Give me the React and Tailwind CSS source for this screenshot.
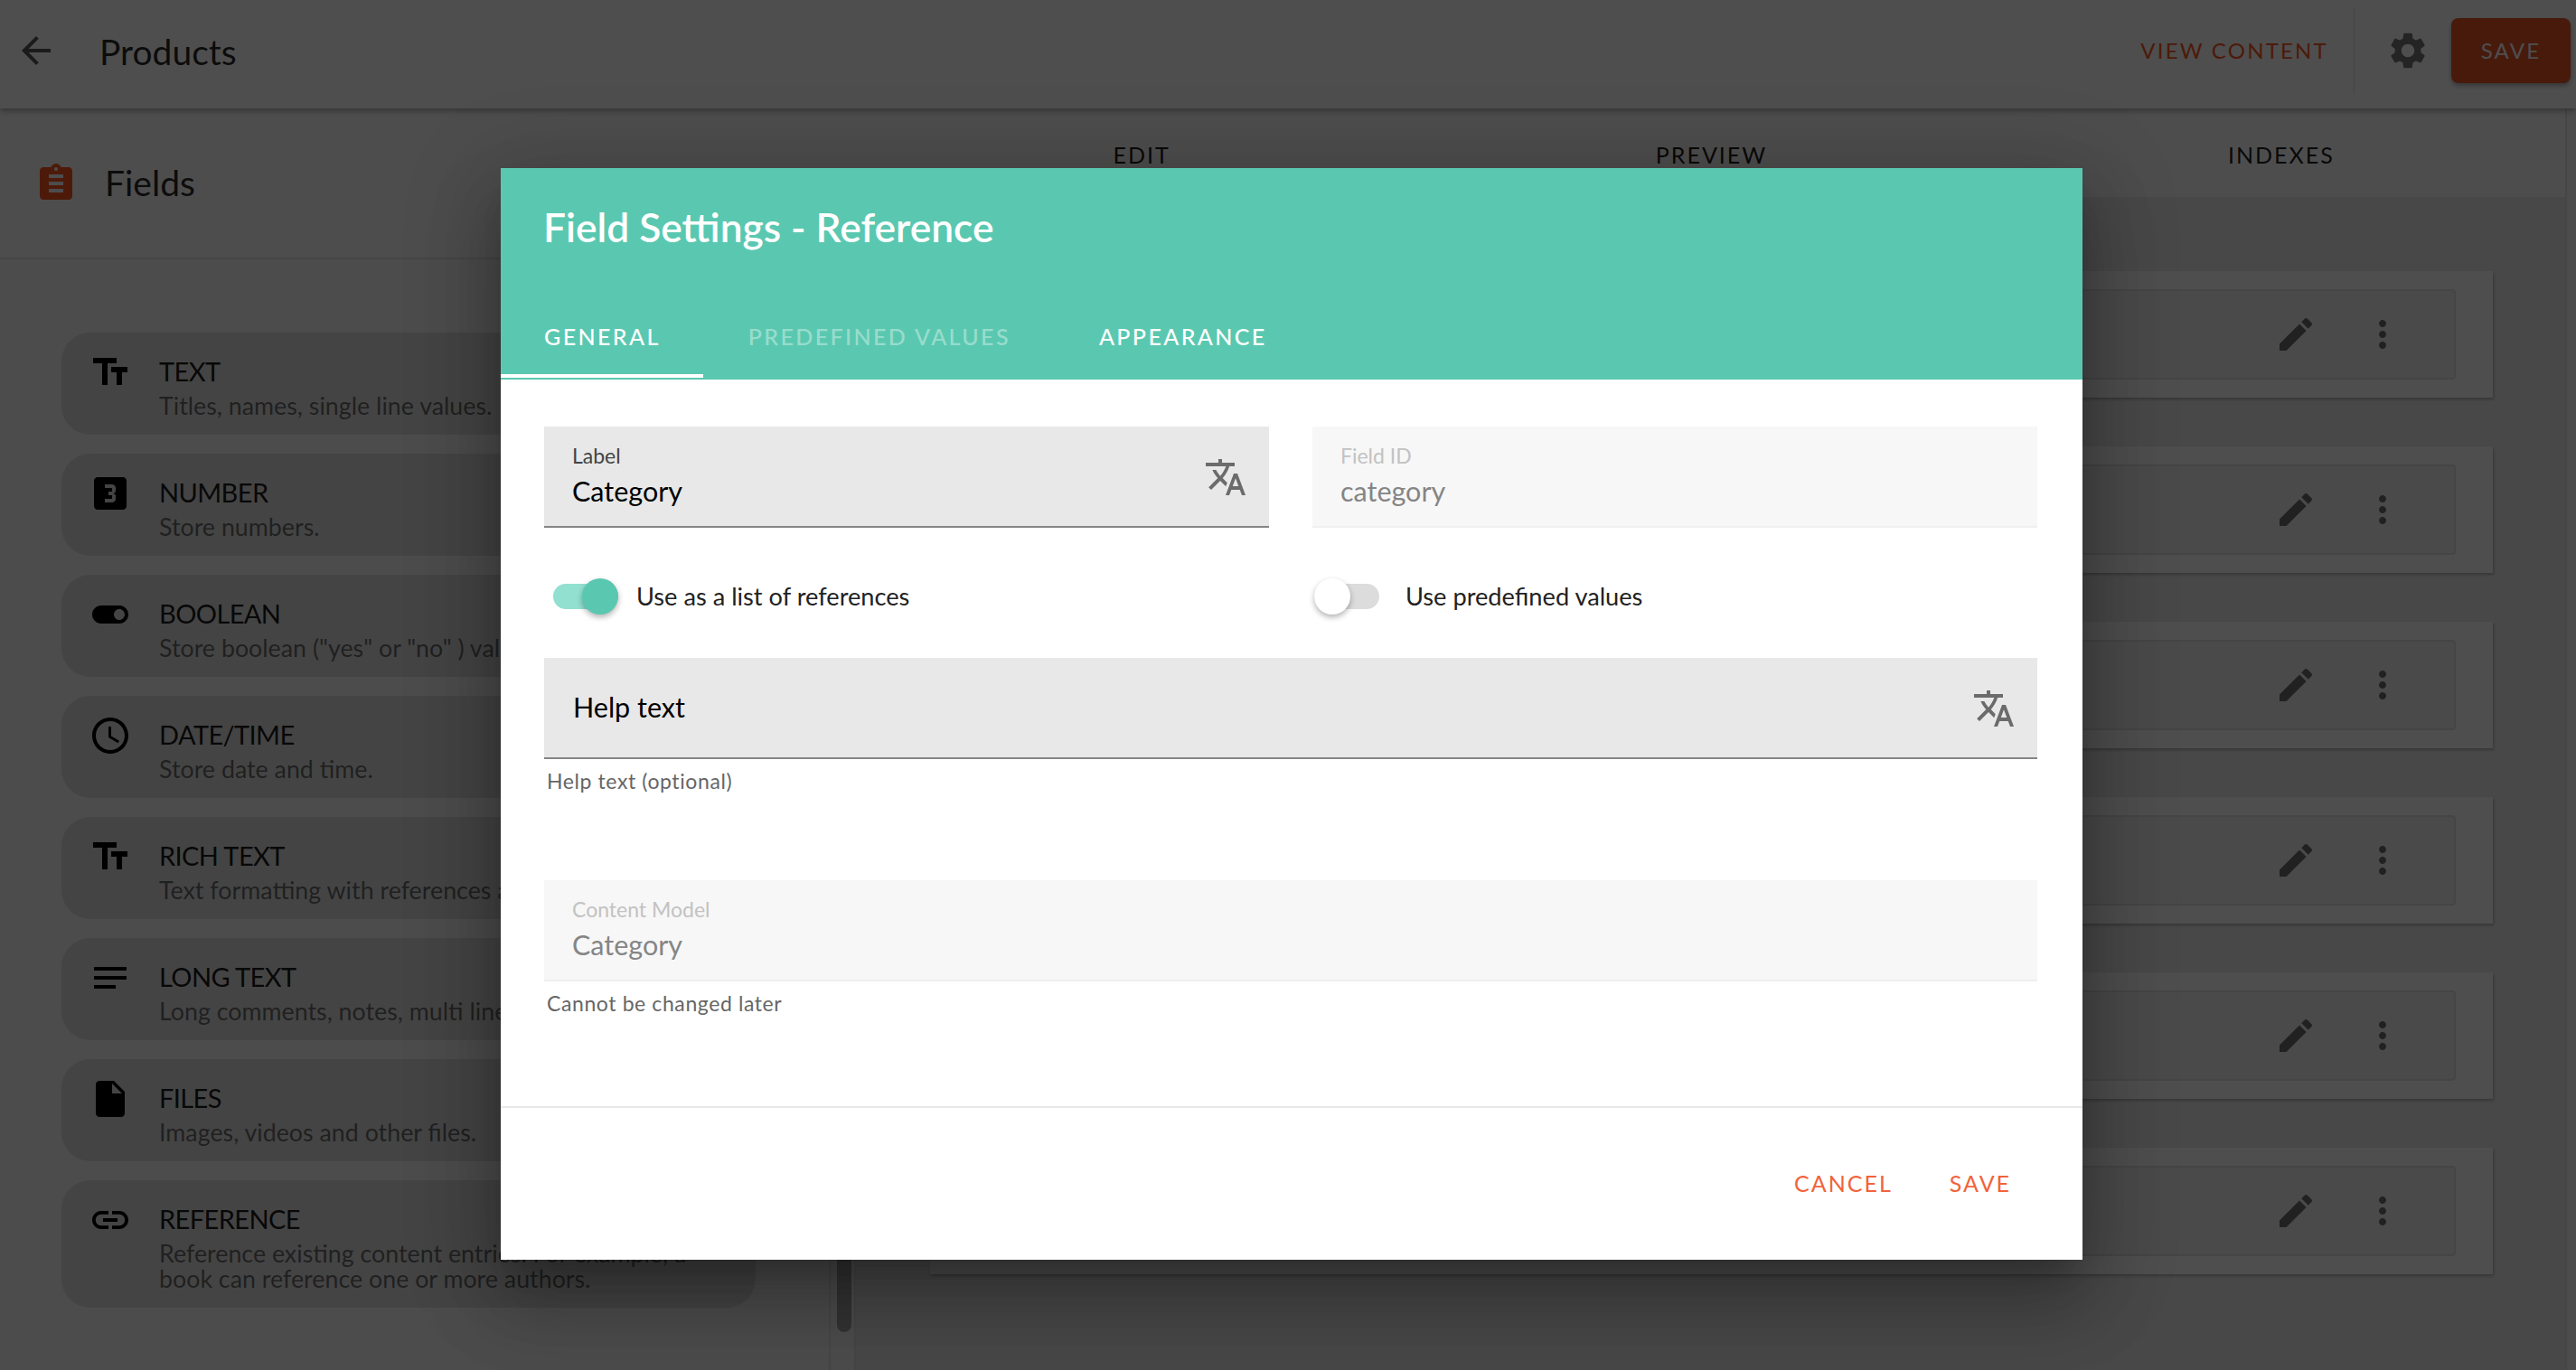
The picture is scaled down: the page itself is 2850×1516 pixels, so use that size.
const FONT = "font-['Lato','Liberation_Sans',sans-serif]"

const ICONS = {
  back: 'M20 11H7.83l5.59-5.59L12 4l-8 8 8 8 1.41-1.41L7.83 13H20v-2z',
  gear: 'M19.14 12.94c.04-.3.06-.61.06-.94 0-.32-.02-.64-.07-.94l2.03-1.58c.18-.14.23-.41.12-.61l-1.92-3.32c-.12-.22-.37-.29-.59-.22l-2.39.96c-.5-.38-1.03-.7-1.62-.94l-.36-2.54c-.04-.24-.24-.41-.48-.41h-3.84c-.24 0-.43.17-.47.41l-.36 2.54c-.59.24-1.13.57-1.62.94l-2.39-.96c-.22-.08-.47 0-.59.22L2.74 8.87c-.12.21-.08.47.12.61l2.03 1.58c-.05.3-.09.63-.09.94s.02.64.07.94l-2.03 1.58c-.18.14-.23.41-.12.61l1.92 3.32c.12.22.37.29.59.22l2.39-.96c.5.38 1.03.7 1.62.94l.36 2.54c.05.24.24.41.48.41h3.84c.24 0 .44-.17.47-.41l.36-2.54c.59-.24 1.13-.56 1.62-.94l2.39.96c.22.08.47 0 .59-.22l1.92-3.32c.12-.22.07-.47-.12-.61l-2.01-1.58zM12 15.6c-1.98 0-3.6-1.62-3.6-3.6s1.62-3.6 3.6-3.6 3.6 1.62 3.6 3.6-1.62 3.6-3.6 3.6z',
  assignment: 'M19 3h-4.18C14.4 1.84 13.3 1 12 1c-1.3 0-2.4.84-2.82 2H5c-1.1 0-2 .9-2 2v14c0 1.1.9 2 2 2h14c1.1 0 2-.9 2-2V5c0-1.1-.9-2-2-2zm-7 0c.55 0 1 .45 1 1s-.45 1-1 1-1-.45-1-1 .45-1 1-1zm4 14H8v-2h8v2zm0-4H8v-2h8v2zm0-4H8V7h8v2z',
  text: 'M2.5 4v3h5v12h3V7h5V4h-13zm19 5h-9v3h3v7h3v-7h3V9z',
  number: 'M19.01 3h-14c-1.1 0-2 .9-2 2v14c0 1.1.9 2 2 2h14c1.1 0 2-.9 2-2V5c0-1.1-.9-2-2-2zm-4 7.5c0 .83-.67 1.5-1.5 1.5.83 0 1.5.67 1.5 1.5V15c0 1.11-.9 2-2 2h-4v-2h4v-2h-2v-2h2V9h-4V7h4c1.1 0 2 .89 2 2v1.5z',
  toggle: 'M17 7H7c-2.76 0-5 2.24-5 5s2.24 5 5 5h10c2.76 0 5-2.24 5-5s-2.24-5-5-5zm0 8c-1.66 0-3-1.34-3-3s1.34-3 3-3 3 1.34 3 3-1.34 3-3 3z',
  clock: 'M11.99 2C6.47 2 2 6.48 2 12s4.47 10 9.99 10C17.52 22 22 17.52 22 12S17.52 2 11.99 2zM12 20c-4.42 0-8-3.58-8-8s3.58-8 8-8 8 3.58 8 8-3.58 8-8 8zm.5-13H11v6l5.25 3.15.75-1.23-4.5-2.67z',
  notes: 'M3 18h12v-2H3v2zM3 6v2h18V6H3zm0 7h18v-2H3v2z',
  file: 'M6 2c-1.1 0-1.99.9-1.99 2L4 20c0 1.1.89 2 1.99 2H18c1.1 0 2-.9 2-2V8l-6-6H6zm7 7V3.5L18.5 9H13z',
  link: 'M3.9 12c0-1.71 1.39-3.1 3.1-3.1h4V7H7c-2.76 0-5 2.24-5 5s2.24 5 5 5h4v-1.9H7c-1.71 0-3.1-1.39-3.1-3.1zM8 13h8v-2H8v2zm9-6h-4v1.9h4c1.71 0 3.1 1.39 3.1 3.1s-1.39 3.1-3.1 3.1h-4V17h4c2.76 0 5-2.24 5-5s-2.24-5-5-5z',
  pencil: 'M3 17.25V21h3.75L17.81 9.94l-3.75-3.75L3 17.25zM20.71 7.04c.39-.39.39-1.02 0-1.41l-2.34-2.34c-.39-.39-1.02-.39-1.41 0l-1.83 1.83 3.75 3.75 1.83-1.83z',
  more: 'M12 8c1.1 0 2-.9 2-2s-.9-2-2-2-2 .9-2 2 .9 2 2 2zm0 2c-1.1 0-2 .9-2 2s.9 2 2 2 2-.9 2-2-.9-2-2-2zm0 6c-1.1 0-2 .9-2 2s.9 2 2 2 2-.9 2-2-.9-2-2-2z',
  translate: 'M12.87 15.07l-2.54-2.51.03-.03c1.74-1.94 2.98-4.17 3.71-6.53H17V4h-7V2H8v2H1v2h11.17C11.5 7.92 10.44 9.75 9 11.35 8.07 10.32 7.3 9.19 6.69 8h-2c.73 1.63 1.73 3.17 2.98 4.56l-5.09 5.02L4 19l5-5 3.11 3.11.76-2.04zM18.5 10h-2L12 22h2l1.12-3h4.75L21 22h2l-4.5-12zm-2.62 7l1.62-4.33L19.12 17h-3.24z',
}

function Icon({ name, className = '' }) {
  return (
    <svg viewBox="0 0 24 24" className={`w-[48px] h-[48px] shrink-0 fill-current ${className}`}>
      <path d={ICONS[name]} />
    </svg>
  )
}

const FIELD_TYPES = [
  { icon: 'text', title: 'TEXT', desc: 'Titles, names, single line values.' },
  { icon: 'number', title: 'NUMBER', desc: 'Store numbers.' },
  { icon: 'toggle', title: 'BOOLEAN', desc: 'Store boolean ("yes" or "no" ) values.' },
  { icon: 'clock', title: 'DATE/TIME', desc: 'Store date and time.' },
  { icon: 'text', title: 'RICH TEXT', desc: 'Text formatting with references and media.' },
  { icon: 'notes', title: 'LONG TEXT', desc: 'Long comments, notes, multi line values.' },
  { icon: 'file', title: 'FILES', desc: 'Images, videos and other files.' },
  { icon: 'link', title: 'REFERENCE', desc: 'Reference existing content entries. For example, a book can reference one or more authors.' },
]

function FieldType({ icon, title, desc }) {
  return (
    <div className="flex gap-[30px] pl-[30px] pr-[28px] pt-[20px] pb-[18px] rounded-[32px] bg-[#dedede]">
      <Icon name={icon} className="text-black" />
      <div className="pt-[3px]">
        <div className="text-[29px] leading-[40px] tracking-[-0.6px] text-black/90">{title}</div>
        <div className="mt-[4px] text-[26.8px] leading-[28px] text-black/55">{desc}</div>
      </div>
    </div>
  )
}

function TextBox({ label, value, disabled, translate }) {
  return (
    <div className={`relative h-[112px] px-[31px] pt-[18px] border-b-2 ${disabled ? 'bg-[#f7f7f7] border-[#efefef]' : 'bg-[#e8e8e8] border-[#858585]'}`}>
      <div className={`text-[23px] leading-[28px] ${disabled ? 'text-[#c2c2c2]' : 'text-[#444]'}`}>{label}</div>
      <div className={`mt-[5px] text-[30.5px] leading-[40px] ${disabled ? 'text-[#858585]' : 'text-black'}`}>{value}</div>
      {translate && <Icon name="translate" className="absolute right-[24px] top-[32px] text-[#6b6b6b]" />}
    </div>
  )
}

function Toggle({ on, label }) {
  return (
    <div className="flex items-center h-[40px]">
      <div className={`relative w-[72px] h-[28px] rounded-full ${on ? 'ml-[10px] bg-[#92e0d0]' : 'ml-[2px] bg-[#dcdcdc]'}`}>
        <div className={`absolute top-[-6px] w-[40px] h-[40px] rounded-full shadow-[0_3px_6px_rgba(0,0,0,0.3)] ${on ? 'right-0 bg-[#5ac8b0]' : 'left-0 bg-white'}`} />
      </div>
      <span className={`text-[27.2px] text-[#222] ${on ? 'ml-[20px]' : 'ml-[29px]'}`}>{label}</span>
    </div>
  )
}

export default function App() {
  return (
    <div className={`relative w-full h-[1516px] overflow-hidden flex flex-col bg-[#f8f8f8] ${FONT}`}>
      {/* Top bar */}
      <header className="relative z-10 h-[120px] pb-[8px] shrink-0 flex items-center bg-white shadow-[0_3px_6px_rgba(0,0,0,0.3)]">
        <Icon name="back" className="ml-[16px] text-[#555]" />
        <div className="ml-[46px] mt-[3px] text-[39px] text-black/85">Products</div>
        <div className="ml-auto text-[24px] tracking-[2.2px] text-[#fa5723]">VIEW CONTENT</div>
        <div className="ml-[28px] w-px h-[96px] bg-[#e0e0e0]" />
        <Icon name="gear" className="ml-[35px] text-[#777]" />
        <div className="ml-[24px] mr-[6px] w-[132px] h-[72px] flex items-center justify-center rounded-[8px] bg-[#e8552a] text-white text-[24px] tracking-[2.2px] shadow-[0_3px_5px_rgba(0,0,0,0.3)]">SAVE</div>
      </header>

      <div className="flex flex-1">
        {/* Field types */}
        <aside className="w-[947px] shrink-0 flex flex-col">
          <div className="h-[167px] shrink-0 flex items-center bg-[#fafafa] border-b-2 border-[#e4e4e4]">
            <Icon name="assignment" className="ml-[38px] text-[#fa5723]" />
            <div className="ml-[30px] text-[39px] text-black/85">Fields</div>
          </div>
          <div className="flex flex-1">
            <div className="w-[919px] pt-[81px] pl-[68px] pr-[81px] flex flex-col gap-[21px] border-r-2 border-[#e4e4e4]">
              {FIELD_TYPES.map(f => <FieldType key={f.title} {...f} />)}
            </div>
            <div className="flex-1 flex flex-col justify-end pb-[42px] pl-[7px] border-r-2 border-[#e4e4e4]">
              <div className="w-[16px] h-[200px] rounded-full bg-[#a8a8a8]" />
            </div>
          </div>
        </aside>

        {/* Editor */}
        <main className="flex-1 mr-[10px] border-r-2 border-[#e4e4e4] bg-[#ececec]">
          <div className="h-[98px] grid grid-cols-3 bg-[#fafafa]">
            {['EDIT', 'PREVIEW', 'INDEXES'].map(t => (
              <div key={t} className="flex items-start justify-center pt-[33px] pl-[2px] text-[25px] leading-[36px] tracking-[2px] text-black/90">{t}</div>
            ))}
          </div>
          <div className="pt-[82px] pl-[82px] pr-[80px] flex flex-col gap-[54px]">
            {[0, 1, 2, 3, 4, 5].map(i => (
              <div key={i} className="h-[140px] p-[20px] pr-[41px] bg-white shadow-[1px_2px_3px_rgba(0,0,0,0.25)]">
                <div className="h-[100px] flex items-center justify-end pr-[55px] gap-[48px] rounded-[4px] bg-[#f0f0f0] border-2 border-[#e2e2e2]">
                  <Icon name="pencil" className="text-[#6e6e6e]" />
                  <Icon name="more" className="text-[#6e6e6e]" />
                </div>
              </div>
            ))}
          </div>
        </main>
      </div>

      {/* Scrim */}
      <div className="absolute inset-0 z-20 bg-black/[0.695]" />

      {/* Field settings dialog */}
      <div className="absolute z-30 left-[554px] top-[186px] w-[1750px] h-[1208px] flex flex-col bg-white shadow-[0_22px_30px_-14px_rgba(0,0,0,0.2),0_48px_76px_6px_rgba(0,0,0,0.2),0_18px_92px_16px_rgba(0,0,0,0.16)]">
        <div className="h-[234px] shrink-0 bg-[#5ac8b0] text-white">
          <div className="pt-[37px] pl-[47px] text-[44.3px] leading-[56px] font-semibold">Field Settings - Reference</div>
          <div className="mt-[45px] flex h-[96px] text-[25px] font-medium tracking-[2.4px]">
            <div className="relative pl-[48px] pr-[47px] pt-[2px] flex items-center">
              GENERAL
              <div className="absolute left-0 right-0 bottom-[2px] h-[4px] bg-white" />
            </div>
            <div className="pl-[50px] pr-[48px] pt-[2px] flex items-center text-white/40">PREDEFINED VALUES</div>
            <div className="px-[50px] pt-[2px] flex items-center">APPEARANCE</div>
          </div>
        </div>

        <div className="h-[804px] shrink-0 pl-[48px] pr-[50px] pt-[52px]">
          <div className="grid grid-cols-2 gap-[48px]">
            <TextBox label="Label" value="Category" translate />
            <TextBox label="Field ID" value="category" disabled />
          </div>
          <div className="grid grid-cols-2 gap-[48px] pt-[56px] pb-[48px]">
            <Toggle on label="Use as a list of references" />
            <Toggle label="Use predefined values" />
          </div>
          <div className="relative h-[112px] px-[32px] flex items-center bg-[#e8e8e8] border-b-2 border-[#858585]">
            <span className="text-[30.5px] text-black">Help text</span>
            <Icon name="translate" className="absolute right-[24px] top-[32px] text-[#6b6b6b]" />
          </div>
          <div className="mt-[8px] ml-[3px] text-[23px] leading-[32px] tracking-[0.6px] text-[#666]">Help text (optional)</div>
          <div className="mt-[94px]">
            <TextBox label="Content Model" value="Category" disabled />
          </div>
          <div className="mt-[8px] ml-[3px] text-[23px] leading-[32px] tracking-[0.6px] text-[#666]">Cannot be changed later</div>
        </div>

        <div className="flex-1 flex items-center justify-end gap-[63px] pr-[79px] border-t-2 border-[#e8e8e8] text-[25px] tracking-[2px] text-[#f2633a]">
          <span>CANCEL</span>
          <span>SAVE</span>
        </div>
      </div>
    </div>
  )
}
